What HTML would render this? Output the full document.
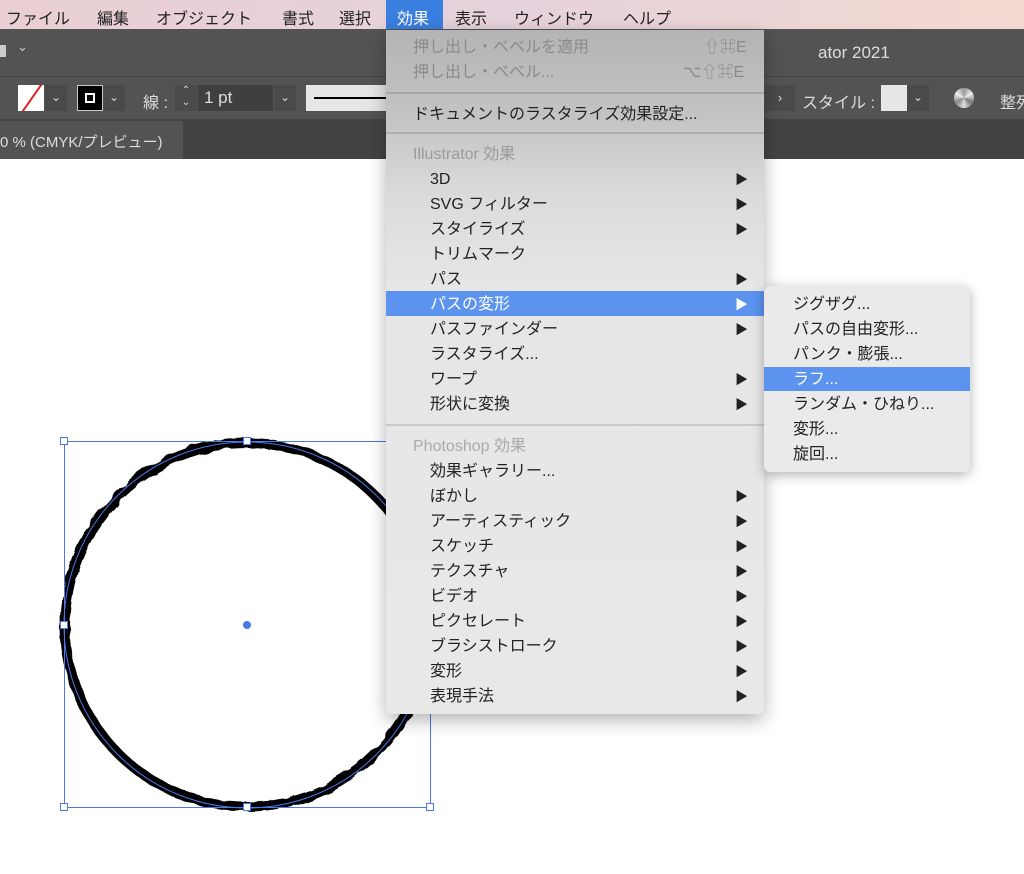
<!DOCTYPE html>
<html><head><meta charset="utf-8"><style>
*{margin:0;padding:0;box-sizing:border-box}
body{width:1024px;height:874px;overflow:hidden;background:#fff;position:relative;font-family:"Liberation Sans","Noto Sans CJK JP",sans-serif}
.a{position:absolute;white-space:nowrap}
#mb{left:0;top:0;width:1024px;height:29px;background:linear-gradient(90deg,#e9cfd3,#e6d2dc 50%,#f2d8cf);font-size:16px;color:#222}
#mb span{position:absolute;top:5px}
#menu{left:386px;top:30px;width:378px;height:684px;background:linear-gradient(180deg,#b4b4b4 0,#c4c4c4 90px,#dcdcdc 170px,#e6e6e6 260px,#e8e8e8);border-radius:0 0 6px 6px;box-shadow:0 6px 18px rgba(0,0,0,.3);font-size:16px;color:#222}
.it{position:absolute;left:44px;height:25px;line-height:27px}
.hd{position:absolute;left:27px;color:#9a9a9a;line-height:27px}
.ar{position:absolute;left:349px;font-size:13px;line-height:27px}
.sep{position:absolute;left:0;width:378px;height:2px;background:rgba(0,0,0,.12)}
#sub{left:764px;top:286px;width:206px;height:186px;background:#eaeaea;border-radius:6px;box-shadow:0 3px 12px rgba(0,0,0,.3);font-size:16px;color:#222}
#sub div{position:absolute;left:29px;line-height:27px}
</style></head><body>
<div class="a" style="left:0;top:29px;width:1024px;height:47px;background:#535353"></div>
<div class="a" style="left:0;top:76px;width:1024px;height:43px;background:#535353;border-top:1px solid #444"></div>
<div class="a" style="left:0;top:119px;width:1024px;height:40px;background:#434343"></div>
<div class="a" style="left:0;top:121px;width:183px;height:38px;background:#535353;color:#ddd;font-size:15px;padding:10px 0 0 0">0 % (CMYK/プレビュー)</div>
<div class="a" style="left:0;top:45px;width:6px;height:12px;background:#ccc"></div>
<div class="a" style="left:17px;top:39px;color:#ccc;font-size:13px">⌄</div>
<div class="a" style="left:818px;top:43px;color:#ddd;font-size:17px">ator 2021</div>
<div class="a" style="left:18px;top:85px;width:26px;height:26px;background:#fff;overflow:hidden"><div style="position:absolute;left:-4px;top:12px;width:36px;height:2px;background:#e02020;transform:rotate(-55deg)"></div></div>
<div class="a" style="left:45px;top:85px;width:22px;height:26px;background:#4a4a4a;color:#ddd;font-size:12px;text-align:center;line-height:24px">⌄</div>
<div class="a" style="left:77px;top:85px;width:26px;height:26px;background:#000;border:1px solid #ccc"><div style="position:absolute;left:7px;top:7px;width:10px;height:10px;border:2px solid #fff"></div></div>
<div class="a" style="left:103px;top:85px;width:22px;height:26px;background:#4a4a4a;color:#ddd;font-size:12px;text-align:center;line-height:24px">⌄</div>
<div class="a" style="left:143px;top:89px;color:#ddd;font-size:16px">線 :</div>
<div class="a" style="left:175px;top:85px;width:22px;height:26px;background:#4a4a4a;color:#ddd;font-size:10px;text-align:center;line-height:12px">⌃<br>⌄</div>
<div class="a" style="left:198px;top:85px;width:75px;height:26px;background:#3f3f3f;color:#ddd;font-size:17px;padding:3px 6px">1 pt</div>
<div class="a" style="left:274px;top:85px;width:22px;height:26px;background:#4a4a4a;color:#ddd;font-size:12px;text-align:center;line-height:24px">⌄</div>
<div class="a" style="left:306px;top:85px;width:80px;height:26px;background:#e6e6e6"><div style="position:absolute;left:8px;top:12px;width:72px;height:2px;background:#000"></div></div>
<div class="a" style="left:765px;top:85px;width:30px;height:26px;background:#4a4a4a;color:#ddd;font-size:13px;text-align:center;line-height:26px">›</div>
<div class="a" style="left:802px;top:89px;color:#ddd;font-size:16px">スタイル :</div>
<div class="a" style="left:881px;top:85px;width:26px;height:26px;background:#e6e6e6"></div>
<div class="a" style="left:907px;top:85px;width:22px;height:26px;background:#4a4a4a;color:#ddd;font-size:12px;text-align:center;line-height:24px">⌄</div>
<div class="a" style="left:954px;top:88px;width:20px;height:20px;border-radius:50%;background:conic-gradient(#999,#eee,#777,#ddd,#888,#eee,#999)"></div>
<div class="a" style="left:1000px;top:89px;color:#ddd;font-size:16px">整列</div>
<div id="mb" class="a">
<span style="left:6px">ファイル</span><span style="left:97px">編集</span><span style="left:156px">オブジェクト</span><span style="left:282px">書式</span><span style="left:339px">選択</span>
<div style="position:absolute;left:386px;top:0;width:57px;height:29px;background:#3a7ee0"></div><span style="left:397px;color:#fff">効果</span>
<span style="left:455px">表示</span><span style="left:514px">ウィンドウ</span><span style="left:623px">ヘルプ</span></div>
<svg class="a" style="left:0;top:0" width="1024" height="874">
<defs><filter id="r" x="-10%" y="-10%" width="120%" height="120%"><feTurbulence type="fractalNoise" baseFrequency="0.06" numOctaves="2" seed="3"/><feDisplacementMap in="SourceGraphic" scale="6"/></filter></defs>
<circle cx="247" cy="625" r="182" fill="none" stroke="#000" stroke-width="10" filter="url(#r)"/>
<circle cx="247" cy="625" r="183" fill="none" stroke="#4a78e8" stroke-width="1"/>
<rect x="64.5" y="441.5" width="366" height="366" fill="none" stroke="#4a78e8" stroke-width="1"/>
<g fill="#fff" stroke="#4a78e8"><rect x="60.5" y="437.5" width="7" height="7"/><rect x="243.5" y="437.5" width="7" height="7"/><rect x="60.5" y="621.5" width="7" height="7"/><rect x="60.5" y="803.5" width="7" height="7"/><rect x="243.5" y="803.5" width="7" height="7"/><rect x="426.5" y="803.5" width="7" height="7"/></g>
<circle cx="247" cy="625" r="4" fill="#4a78e8"/>
</svg>
<div id="menu" class="a">
<div class="hd" style="top:4px;color:#8a8a8a">押し出し・ベベルを適用</div><div class="hd" style="top:4px;left:318px;color:#8a8a8a">⇧⌘E</div>
<div class="hd" style="top:29px;color:#8a8a8a">押し出し・ベベル...</div><div class="hd" style="top:29px;left:297px;color:#8a8a8a">⌥⇧⌘E</div>
<div class="sep" style="top:62px"></div>
<div class="hd" style="top:71px;color:#222">ドキュメントのラスタライズ効果設定...</div>
<div class="sep" style="top:102px"></div>
<div class="hd" style="top:111px">Illustrator 効果</div>
<div class="it" style="top:136px">3D</div><div class="ar" style="top:136px">▶</div>
<div class="it" style="top:161px">SVG フィルター</div><div class="ar" style="top:161px">▶</div>
<div class="it" style="top:186px">スタイライズ</div><div class="ar" style="top:186px">▶</div>
<div class="it" style="top:211px">トリムマーク</div>
<div class="it" style="top:236px">パス</div><div class="ar" style="top:236px">▶</div>
<div style="position:absolute;left:0;top:261px;width:378px;height:25px;background:#5b93ef"></div>
<div class="it" style="top:261px;color:#fff">パスの変形</div><div class="ar" style="top:261px;color:#fff">▶</div>
<div class="it" style="top:286px">パスファインダー</div><div class="ar" style="top:286px">▶</div>
<div class="it" style="top:311px">ラスタライズ...</div>
<div class="it" style="top:336px">ワープ</div><div class="ar" style="top:336px">▶</div>
<div class="it" style="top:361px">形状に変換</div><div class="ar" style="top:361px">▶</div>
<div class="sep" style="top:394px"></div>
<div class="hd" style="top:403px;color:#aaa">Photoshop 効果</div>
<div class="it" style="top:428px">効果ギャラリー...</div>
<div class="it" style="top:453px">ぼかし</div><div class="ar" style="top:453px">▶</div>
<div class="it" style="top:478px">アーティスティック</div><div class="ar" style="top:478px">▶</div>
<div class="it" style="top:503px">スケッチ</div><div class="ar" style="top:503px">▶</div>
<div class="it" style="top:528px">テクスチャ</div><div class="ar" style="top:528px">▶</div>
<div class="it" style="top:553px">ビデオ</div><div class="ar" style="top:553px">▶</div>
<div class="it" style="top:578px">ピクセレート</div><div class="ar" style="top:578px">▶</div>
<div class="it" style="top:603px">ブラシストローク</div><div class="ar" style="top:603px">▶</div>
<div class="it" style="top:628px">変形</div><div class="ar" style="top:628px">▶</div>
<div class="it" style="top:653px">表現手法</div><div class="ar" style="top:653px">▶</div>
</div>
<div id="sub" class="a">
<div style="top:5px">ジグザグ...</div>
<div style="top:30px">パスの自由変形...</div>
<div style="top:55px">パンク・膨張...</div>
<div style="position:absolute;left:0;top:81px;width:206px;height:24px;background:#5b93ef"></div>
<div style="top:80px;color:#fff">ラフ...</div>
<div style="top:105px">ランダム・ひねり...</div>
<div style="top:130px">変形...</div>
<div style="top:155px">旋回...</div>
</div>
</body></html>
